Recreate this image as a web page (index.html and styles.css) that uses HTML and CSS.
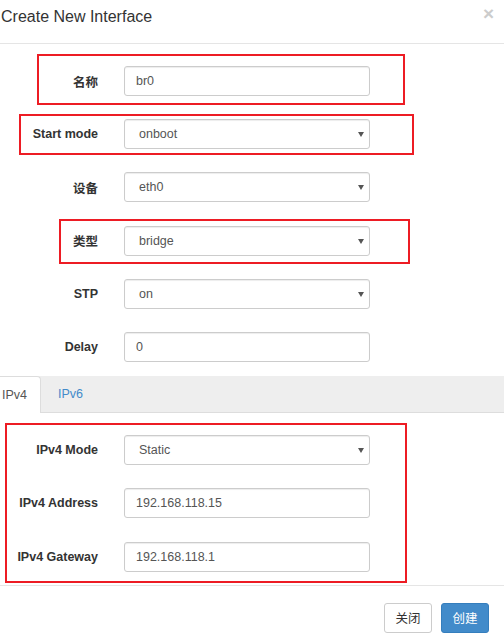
FILE: index.html
```html
<!DOCTYPE html>
<html lang="zh">
<head>
<meta charset="utf-8">
<title>Create New Interface</title>
<link rel="stylesheet" href="styles.css">
</head>
<body>
<div class="modal">
  <div class="modal-header">
    <h4 class="modal-title">Create New Interface</h4>
    <span class="close">×</span>
  </div>

  <div class="modal-body">
    <div class="form-section main">
      <div class="form-group">
        <label class="control-label">名称</label>
        <input class="form-control" type="text" value="br0">
      </div>
      <div class="form-group">
        <label class="control-label">Start mode</label>
        <div class="select"><span class="select-value">onboot</span></div>
      </div>
      <div class="form-group">
        <label class="control-label">设备</label>
        <div class="select"><span class="select-value">eth0</span></div>
      </div>
      <div class="form-group">
        <label class="control-label">类型</label>
        <div class="select"><span class="select-value">bridge</span></div>
      </div>
      <div class="form-group">
        <label class="control-label">STP</label>
        <div class="select"><span class="select-value">on</span></div>
      </div>
      <div class="form-group">
        <label class="control-label">Delay</label>
        <input class="form-control" type="text" value="0">
      </div>
    </div>

    <ul class="nav-tabs">
      <li class="tab active">IPv4</li>
      <li class="tab">IPv6</li>
    </ul>

    <div class="form-section ipv4">
      <div class="form-group">
        <label class="control-label">IPv4 Mode</label>
        <div class="select"><span class="select-value">Static</span></div>
      </div>
      <div class="form-group">
        <label class="control-label">IPv4 Address</label>
        <input class="form-control" type="text" value="192.168.118.15">
      </div>
      <div class="form-group">
        <label class="control-label">IPv4 Gateway</label>
        <input class="form-control" type="text" value="192.168.118.1">
      </div>
    </div>
  </div>

  <div class="modal-footer">
    <button class="btn btn-default">关闭</button>
    <button class="btn btn-primary">创建</button>
  </div>

  <div class="mark mark-name"></div>
  <div class="mark mark-start"></div>
  <div class="mark mark-type"></div>
  <div class="mark mark-ipv4"></div>
</div>
</body>
</html>
```

FILE: styles.css
```css
html, body {
  margin: 0;
  padding: 0;
  background: #fff;
  overflow: hidden;
}

body {
  font-family: "Liberation Sans", Arial, "Noto Sans CJK SC", sans-serif;
  color: #333;
  font-size: 12.5px;
}

.modal {
  position: relative;
  width: 504px;
  height: 644px;
}

.modal-header {
  display: flex;
  justify-content: space-between;
  align-items: flex-start;
  height: 43px;
  border-bottom: 1px solid #e5e5e5;
  box-sizing: content-box;
}

.modal-title {
  margin: 0;
  padding: 8px 0 0 1px;
  font-size: 16px;
  line-height: 18px;
  font-weight: normal;
  color: #333;
}

.close {
  margin: 3px 10px 0 0;
  font-size: 19px;
  line-height: 22px;
  font-weight: bold;
  color: #cccccc;
}

.form-section.main {
  padding: 22px 0 14px;
}

.form-section.ipv4 {
  padding: 22px 0 13px;
}

.form-group {
  display: grid;
  grid-template-columns: 98px 246px;
  column-gap: 26px;
  align-items: center;
  height: 30px;
  margin-bottom: 23.2px;
}

.ipv4 .form-group {
  margin-bottom: 23.5px;
}

.form-section .form-group:last-child {
  margin-bottom: 0;
}

.control-label {
  text-align: right;
  font-weight: bold;
  font-size: 12.5px;
  color: #333;
  white-space: nowrap;
}

.form-control,
.select {
  box-sizing: border-box;
  width: 246px;
  height: 30px;
  border: 1px solid #ccc;
  border-radius: 3px;
  background: #fff;
  box-shadow: inset 0 1px 1px rgba(0, 0, 0, .075);
  font-family: "Liberation Sans", Arial, sans-serif;
  font-size: 12.5px;
  color: #555;
}

.form-control {
  padding: 0 11px;
  outline: none;
}

.select {
  position: relative;
  display: flex;
  align-items: center;
  padding: 0 14px;
}

.select::after {
  content: "";
  position: absolute;
  right: 5px;
  top: 12px;
  width: 0;
  height: 0;
  border-left: 3.5px solid transparent;
  border-right: 3.5px solid transparent;
  border-top: 5px solid #555;
}

.nav-tabs {
  display: flex;
  list-style: none;
  margin: 0;
  padding: 0;
  height: 36px;
  background: #eeeeee;
  border-bottom: 1px solid #dddddd;
}

.tab {
  display: flex;
  align-items: center;
  height: 36px;
  font-size: 12.5px;
  color: #428bca;
  margin-right: 2px;
  padding: 0 15px;
}

.tab.active {
  box-sizing: border-box;
  width: 41px;
  height: 37px;
  padding: 0 0 0 2px;
  background: #fff;
  color: #555;
  border-top: 1px solid #dddddd;
  border-right: 1px solid #dddddd;
  border-top-right-radius: 4px;
  margin-bottom: -1px;
}

.modal-footer {
  display: flex;
  justify-content: flex-end;
  gap: 9px;
  border-top: 1px solid #e5e5e5;
  padding: 17px 15px 11px 0;
}

.btn {
  box-sizing: border-box;
  width: 48px;
  height: 30px;
  border: 1px solid #ccc;
  border-radius: 3px;
  font-family: "Liberation Sans", Arial, "Noto Sans CJK SC", sans-serif;
  font-size: 12.5px;
  padding: 0;
  cursor: pointer;
}

.btn-default {
  background: #fff;
  color: #333;
}

.btn-primary {
  background: #428bca;
  border-color: #357ebd;
  color: #fff;
}

.mark {
  position: absolute;
  box-sizing: border-box;
  border: 2px solid #ed1c24;
  pointer-events: none;
}

.mark-name {
  left: 37px;
  top: 54px;
  width: 368px;
  height: 51px;
}

.mark-start {
  left: 19px;
  top: 114px;
  width: 395px;
  height: 41px;
}

.mark-type {
  left: 59px;
  top: 219px;
  width: 351px;
  height: 45px;
}

.mark-ipv4 {
  left: 5px;
  top: 423px;
  width: 402px;
  height: 160px;
}
```
